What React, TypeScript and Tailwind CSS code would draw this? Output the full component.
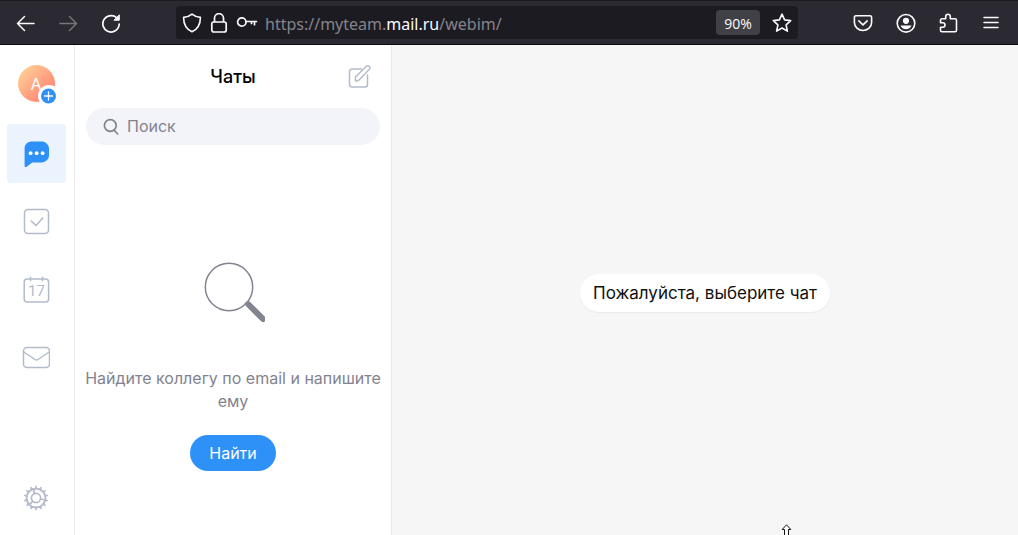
import type { ReactNode } from 'react';

function Icon({
  size,
  label,
  children,
  className = '',
  width = 1.5,
}: {
  size: number;
  label?: string;
  children: ReactNode;
  className?: string;
  width?: number;
}) {
  return (
    <svg
      width={size}
      height={size}
      viewBox={`0 0 ${size} ${size}`}
      fill="none"
      stroke="currentColor"
      strokeWidth={width}
      strokeLinecap="round"
      strokeLinejoin="round"
      className={`shrink-0 ${className}`}
      role={label ? 'img' : undefined}
      aria-label={label}
      aria-hidden={label ? undefined : true}
    >
      {children}
    </svg>
  );
}

function ToolButton({ label, disabled, children }: { label: string; disabled?: boolean; children: ReactNode }) {
  return (
    <button
      type="button"
      aria-label={label}
      disabled={disabled}
      className="flex h-9 w-[43px] items-center justify-center text-[#fbfbfe] disabled:text-[#75747b]"
    >
      {children}
    </button>
  );
}

function BrowserBar() {
  return (
    <header className="flex h-[45px] shrink-0 items-center border-t border-b border-t-[#1c1b22] border-b-[#0c0c0d] bg-[#2b2a33] pr-[5px] pl-1">
      <ToolButton label="Назад">
        <Icon size={20}>
          <path d="M18 10.5H1.500M8.500 3.500l-7 7 7 7" />
        </Icon>
      </ToolButton>
      <ToolButton label="Вперёд" disabled>
        <Icon size={20}>
          <path d="M1 10.5h16.500M10.500 3.500l7 7-7 7" />
        </Icon>
      </ToolButton>
      <ToolButton label="Обновить">
        <Icon size={20} width={1.7}>
          <path d="M15.800 6.200A8.200 8.200 0 1 0 17.200 11" />
          <path d="M17.300 2.200v5h-5z" fill="currentColor" strokeWidth={1} />
        </Icon>
      </ToolButton>

      <div className="mx-[43px] flex h-[33px] min-w-0 flex-1 items-center rounded bg-[#1c1b22] px-1.5 text-[#fbfbfe]">
        <Icon size={20} width={1.6} label="Защита">
          <path d="M10 1.2c2 1.7 5 2.9 8.4 3.2 0 6.5-2.3 11.5-8.4 14.4C3.9 15.9 1.6 10.9 1.6 4.4 5 4.1 8 2.9 10 1.2z" />
        </Icon>
        <Icon size={20} width={1.7} label="Соединение защищено" className="ml-[7px]">
          <path d="M5.500 8.500V5.200a4.500 4.500 0 0 1 9 0v3.300" />
          <rect x="2.800" y="9" width="14.400" height="10" rx="2" />
        </Icon>
        <Icon size={22} width={1.7} label="Пароль" className="ml-[7px]">
          <circle cx="5.800" cy="10" r="4.200" />
          <path d="M10 9.500h10.500M18.500 9.500v3.200M15.500 9.500v2" />
        </Icon>
        <div className="relative ml-[7px] h-6 min-w-0 flex-1 font-['Noto_Sans',sans-serif] text-base leading-[26px]">
          <input
            type="text"
            aria-label="Адрес"
            readOnly
            value="https://myteam.mail.ru/webim/"
            className="h-6 w-full bg-transparent text-transparent outline-none"
          />
          <div aria-hidden className="pointer-events-none absolute inset-0 whitespace-nowrap text-[#85848b]">
            https://myteam.<span className="text-[#fbfbfe]">mail.ru</span>/webim/
          </div>
        </div>
        <button
          type="button"
          className="h-[25px] w-11 rounded-sm bg-[#404147] font-['Open_Sans','Noto_Sans',sans-serif] text-sm leading-[27px] text-[#fbfbfe]"
        >
          90%
        </button>
        <button type="button" aria-label="Добавить в закладки" className="ml-3">
          <Icon size={20} width={1.6}>
            <path d="M10 1.200l2.600 5.700 6.100.7-4.600 4.200 1.300 6.300L10 15l-5.400 3.100 1.300-6.300-4.600-4.200 6.100-.7z" />
          </Icon>
        </button>
      </div>

      <ToolButton label="Pocket">
        <Icon size={20} width={1.6}>
          <path d="M3 2.700h14a1.600 1.600 0 0 1 1.600 1.600v5.200a8.600 8 0 0 1-17.200 0V4.300A1.600 1.600 0 0 1 3 2.700z" />
          <path d="M5.800 7.800L10 11.800l4.200-4" />
        </Icon>
      </ToolButton>
      <ToolButton label="Аккаунт">
        <Icon size={20} width={1.6}>
          <circle cx="10" cy="10.300" r="8.800" />
          <circle cx="10" cy="7.800" r="3.100" fill="currentColor" stroke="none" />
          <path d="M4.500 12.500h11c-.8 2.400-2.900 3.800-5.500 3.800s-4.700-1.400-5.500-3.800z" fill="currentColor" stroke="none" />
        </Icon>
      </ToolButton>
      <ToolButton label="Расширения">
        <Icon size={20} width={1.6}>
          <path d="M6.700 5.800V3.500a2.300 2.300 0 0 1 4.600 0v2.300h4.700a1.500 1.500 0 0 1 1.500 1.500v9.900a1.500 1.500 0 0 1-1.500 1.500H3A1.500 1.500 0 0 1 1.500 17.200v-3h2.300a2.200 2.200 0 0 0 0-4.400H1.500V7.300A1.500 1.500 0 0 1 3 5.800z" />
        </Icon>
      </ToolButton>
      <ToolButton label="Меню">
        <Icon size={20}>
          <path d="M2 4.500h14M2 9.500h14M2 14.500h14" />
        </Icon>
      </ToolButton>
    </header>
  );
}

function NavLink({ label, active, children }: { label: string; active?: boolean; children: ReactNode }) {
  return (
    <a
      href="#"
      aria-label={label}
      aria-current={active ? 'page' : undefined}
      className={`flex h-[59px] w-[59px] items-center justify-center rounded pr-px pb-px ${active ? 'bg-[#ebf3fe] text-[#2e91f7]' : 'text-[#b3bbcb]'}`}
    >
      {children}
    </a>
  );
}

function Sidebar() {
  const teeth = Array.from({ length: 14 }, (_, i) => (i * 360) / 14);
  return (
    <nav className="flex w-[75px] shrink-0 flex-col items-center border-r border-[#ebebed] pt-5 pr-px pb-2">
      <button type="button" aria-label="Профиль" className="relative h-[37px] w-[37px]">
        <span className="flex h-full w-full items-center justify-center rounded-full bg-linear-to-br from-[#ffd99b] to-[#ff6f6c] pr-px text-base text-white">
          А
        </span>
        <span className="absolute -right-[5px] -bottom-[5px] flex h-[22px] w-[22px] items-center justify-center rounded-full bg-white text-white">
          <Icon size={16} width={1.3}>
            <circle cx="7.500" cy="8" r="7.500" fill="#2e91f7" stroke="none" />
            <path d="M7.500 4v8M3.500 8h8" />
          </Icon>
        </span>
      </button>

      <div className="mt-[22px] flex flex-col gap-[9px]">
        <NavLink label="Чаты" active>
          <Icon size={28} width={1}>
            <path
              d="M9.300 2.600h10.700a7 7 0 0 1 7 7v6.800a7 7 0 0 1-7 7h-9.800L4.300 28a1 1 0 0 1-1.700-.8V9.300a6.700 6.700 0 0 1 6.700-6.700z"
              fill="currentColor"
              stroke="none"
            />
            <g fill="#fff" stroke="none">
              <circle cx="8.600" cy="14.200" r="1.900" />
              <circle cx="14.600" cy="14.200" r="1.900" />
              <circle cx="20.600" cy="14.200" r="1.900" />
            </g>
          </Icon>
        </NavLink>
        <NavLink label="Задачи">
          <Icon size={28}>
            <rect x="2.500" y="2.500" width="24" height="24" rx="3.500" />
            <path d="M9.300 14.100l4.800 4.500 6.600-7.600" />
          </Icon>
        </NavLink>
        <NavLink label="Календарь">
          <Icon size={28}>
            <rect x="2.200" y="4" width="24.400" height="23" rx="3" />
            <path d="M8.500 2.300v3.500M20.500 2.300v3.500" />
            <text
              x="14.500"
              y="21"
              textAnchor="middle"
              fill="currentColor"
              stroke="none"
              className="font-['Roboto',sans-serif] text-[15px]"
            >
              17
            </text>
          </Icon>
        </NavLink>
        <NavLink label="Почта">
          <Icon size={28}>
            <rect x="1.500" y="4.500" width="26" height="20" rx="3.500" />
            <path d="M1.800 9l11.200 7.500a2.600 2.600 0 0 0 3 0L27.200 9" />
          </Icon>
        </NavLink>
      </div>

      <button type="button" aria-label="Настройки" className="mt-auto flex h-[59px] w-[59px] items-center justify-center pr-px text-[#b3bbcb]">
        <Icon size={28} width={1.7}>
          <circle cx="14" cy="14" r="9.400" />
          <circle cx="14" cy="14" r="4.600" />
          <path d="M12.500 9.500L11.600 5M18.500 15l4.700 1M10.800 17.300l-3.500 3.200" />
          {teeth.map((angle) => (
            <path key={angle} d="M13 4.400L14 1.800l1 2.600z" fill="currentColor" strokeWidth={0.8} transform={`rotate(${angle} 14 14)`} />
          ))}
        </Icon>
      </button>
    </nav>
  );
}

function ChatList() {
  return (
    <section className="flex w-[317px] shrink-0 flex-col border-r border-[#e9e9eb]">
      <div className="grid h-[63px] shrink-0 grid-cols-[1fr_auto_1fr] items-center px-[19px]">
        <h1 className="col-start-2 text-lg font-medium text-black">Чаты</h1>
        <button type="button" aria-label="Новый чат" className="justify-self-end text-[#b3bbcb]">
          <Icon size={26} width={1.5}>
            <path d="M15.500 5H6A2.500 2.500 0 0 0 3.500 7.500v13A2.500 2.500 0 0 0 6 23h13a2.500 2.500 0 0 0 2.500-2.500v-9.500" />
            <path d="M9.500 17v-4L20.300 2.200a1.900 1.900 0 0 1 2.700 0l.4.400a1.900 1.900 0 0 1 0 2.700L13 16c-.6.700-1.800 1-3.500 1z" />
          </Icon>
        </button>
      </div>

      <div className="mx-[11px] flex h-[37px] shrink-0 items-center gap-[7px] rounded-full bg-[#f3f4f9] pl-4 text-[#82838f]">
        <label htmlFor="search" aria-label="Поиск">
          <Icon size={18} width={1.7}>
            <circle cx="8.300" cy="7.500" r="5.900" />
            <path d="M12 12l3.700 4" />
          </Icon>
        </label>
        <input
          id="search"
          type="text"
          placeholder="Поиск"
          className="min-w-0 flex-1 bg-transparent pb-px text-base outline-none placeholder:text-[#82838f] placeholder:opacity-100"
        />
      </div>

      <div className="flex flex-col items-center px-2 pt-[115px]">
        <Icon size={64} width={1.5} className="text-[#82848f]">
          <circle cx="28" cy="27" r="23.700" />
          <path d="M47.500 44.500L62 59" strokeWidth={6} />
          <path d="M44.500 42.500l3 3" strokeWidth={3} strokeLinecap="butt" />
        </Icon>
        <p className="mt-[43px] text-center text-base leading-[23px] text-[#82838f]">
          Найдите коллегу по email и напишите ему
        </p>
        <button type="button" className="mt-[22px] h-9 rounded-full bg-[#2e91f7] px-[19px] text-base text-white">
          Найти
        </button>
      </div>
    </section>
  );
}

export default function App() {
  return (
    <div className="relative flex min-h-screen flex-col bg-white font-['Inter','Roboto',sans-serif] text-black">
      <BrowserBar />
      <div className="flex flex-1">
        <Sidebar />
        <ChatList />
        <main className="flex min-w-0 flex-1 items-center justify-center bg-[#f6f6f6] pt-1.5">
          <p className="rounded-full bg-white px-[13px] py-[7px] text-[17px] leading-6 text-[#101010] shadow-xs">
            Пожалуйста, выберите чат
          </p>
        </main>
      </div>
      <svg className="pointer-events-none absolute bottom-0 left-[781px]" width="11" height="11" viewBox="0 0 11 11" aria-hidden>
        <path d="M5.500 0.800L9.800 5.500H7.500V11.500H3.500V5.500H1.200z" fill="#fff" stroke="#111" strokeWidth="1" />
      </svg>
    </div>
  );
}
